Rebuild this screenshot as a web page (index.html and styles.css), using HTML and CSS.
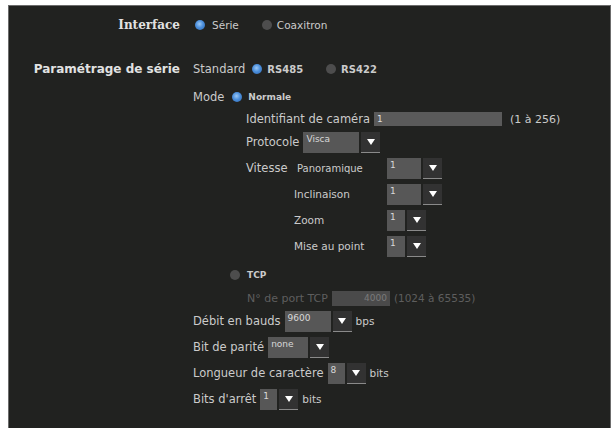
FILE: index.html
```html
<!DOCTYPE html>
<html lang="fr">
<head>
    <meta charset="UTF-8">
    <title>Paramétrage de série</title>
    <link rel="stylesheet" href="styles.css">
</head>
<body>

    <!-- Panneau principal -->
    <div class="panel">
        <div class="grid">

            <!-- Interface -->
            <div class="label label-serif row">Interface</div>
            <div class="row">
                <span class="radio on first"></span><span class="opt">Série</span>
                <span class="radio gap"></span><span class="opt">Coaxitron</span>
            </div>

            <!-- Paramétrage de série -->
            <div class="label row section">Paramétrage de série</div>
            <div class="group section">
                <div class="row">
                    Standard
                    <span class="radio on std"></span><span class="opt-b rs">RS485</span>
                    <span class="radio gap-lg"></span><span class="opt-b rs">RS422</span>
                </div>
                <div class="row row-mid mode">
                    Mode
                    <span class="radio on mode-radio"></span><span class="opt-b">Normale</span>
                </div>

                <div class="sub">
                    <div class="row row-sm">
                        Identifiant de caméra
                        <input class="text-field ident" type="text" value="1">
                        <span class="hint">(1 à 256)</span>
                    </div>
                    <div class="row">
                        Protocole
                        <span class="select"><span class="val w-visca">Visca</span><span class="btn"></span></span>
                    </div>
                    <div class="speed-block">
                        <span class="vlabel">Vitesse</span>
                        <div class="speed">
                            <div class="row"><span class="small pan">Panoramique</span></div>
                            <div class="row"><span class="select"><span class="val w-speed">1</span><span class="btn"></span></span></div>
                            <div class="row"><span class="small">Inclinaison</span></div>
                            <div class="row"><span class="select"><span class="val w-speed">1</span><span class="btn"></span></span></div>
                            <div class="row"><span class="small">Zoom</span></div>
                            <div class="row"><span class="select"><span class="val w-num">1</span><span class="btn"></span></span></div>
                            <div class="row"><span class="small">Mise au point</span></div>
                            <div class="row"><span class="select"><span class="val w-num">1</span><span class="btn"></span></span></div>
                        </div>
                    </div>
                </div>

                <div class="row tcp">
                    <span class="radio"></span><span class="opt-b">TCP</span>
                </div>
                <div class="row row-sm port">
                    N° de port TCP
                    <input class="text-field port-field" type="text" value="4000" disabled>
                    <span class="hint-dim">(1024 à 65535)</span>
                </div>

                <div class="row">
                    Débit en bauds
                    <span class="select"><span class="val w-baud">9600</span><span class="btn"></span></span>
                    <span class="unit">bps</span>
                </div>
                <div class="row">
                    Bit de parité
                    <span class="select"><span class="val w-parity">none</span><span class="btn"></span></span>
                </div>
                <div class="row">
                    Longueur de caractère
                    <span class="select"><span class="val w-bit">8</span><span class="btn"></span></span>
                    <span class="unit">bits</span>
                </div>
                <div class="row">
                    Bits d'arrêt
                    <span class="select"><span class="val w-bit">1</span><span class="btn"></span></span>
                    <span class="unit">bits</span>
                </div>
            </div>

        </div>
    </div>

</body>
</html>
```

FILE: styles.css
```css
body {
    margin: 0;
    padding: 5px 4px 0 8px;
    background-color: #fff;
    font-family: 'DejaVu Sans', Verdana, sans-serif;
    font-size: 11.5px;
    color: #cbcbcb;
    overflow: hidden;
    height: 428px;
    box-sizing: border-box;
}
.panel {
    background-color: #212220;
    border: 1px solid #6c6c6c;
    border-bottom: none;
    height: 440px;
    padding-top: 6px;
    box-sizing: border-box;
}
.grid {
    display: grid;
    grid-template-columns: 171px 1fr;
    column-gap: 13px;
    align-items: start;
}
.section {
    margin-top: 18px;
}
.row {
    display: flex;
    align-items: center;
    height: 26px;
    white-space: nowrap;
}
.row-mid {
    height: 24px;
}
.row-sm {
    height: 20px;
}
.label {
    justify-content: flex-end;
    font-weight: bold;
    font-size: 12px;
    color: #e2e2e2;
}
.label-serif {
    font-family: 'DejaVu Serif', Georgia, serif;
}

/* Radios */
.radio {
    display: inline-block;
    width: 10px;
    height: 10px;
    border-radius: 50%;
    background-color: #4d4d4d;
    margin-right: 5px;
    flex-shrink: 0;
}
.radio.on {
    background: radial-gradient(circle at 45% 40%, #9cc8f5 0, #4b8fdc 45%, #2f66ad 100%);
}
.radio.first {
    margin-left: 2px;
    margin-right: 7px;
}
.radio.gap {
    margin-left: 23px;
}
.radio.std {
    margin-left: 7px;
}
.radio.gap-lg {
    margin-left: 23px;
}
.radio.mode-radio {
    margin-left: 8px;
    margin-right: 6px;
}
.opt {
    font-size: 10.5px;
}
.opt-b {
    font-size: 9px;
    font-weight: bold;
}
.opt-b.rs {
    font-size: 10px;
}
.mode {
    margin-top: 3px;
}

/* Sous-bloc */
.sub {
    margin-left: 53px;
}
.text-field {
    border: none;
    margin: 0 0 0 4px;
    padding: 0 3px;
    height: 14px;
    box-sizing: border-box;
    background-color: #5a5a5a;
    color: #ddd;
    font-family: 'DejaVu Sans', Verdana, sans-serif;
    font-size: 9px;
}
.ident {
    width: 128px;
}
.hint {
    margin-left: 8px;
    font-size: 11px;
}
.speed-block {
    display: flex;
}
.vlabel {
    width: 48px;
    height: 26px;
    line-height: 26px;
}
.speed {
    display: grid;
    grid-template-columns: 93px auto;
}
.small {
    font-size: 10.5px;
}
.small.pan {
    font-size: 10px;
    margin-left: 3px;
}

/* Listes deroulantes */
.select {
    display: inline-flex;
    height: 21px;
    margin-left: 4px;
}
.speed .select {
    margin-left: 0;
}
.select .val {
    background-color: #575757;
    color: #d8d8d8;
    font-size: 9px;
    padding: 2px 3px;
    box-sizing: border-box;
}
.select .btn {
    width: 19px;
    margin-left: 2px;
    background-color: #323232;
    border-bottom: 1px solid #8a8a8a;
    box-sizing: border-box;
    display: flex;
    align-items: center;
    justify-content: center;
}
.select .btn::after {
    content: '';
    border-left: 4px solid transparent;
    border-right: 4px solid transparent;
    border-top: 6px solid #fff;
}
.w-visca { width: 56px; }
.w-speed { width: 34px; }
.w-num { width: 18px; }
.w-baud { width: 46px; }
.w-parity { width: 40px; }
.w-bit { width: 17px; }
.unit {
    margin-left: 4px;
    font-size: 10.5px;
}

/* TCP */
.tcp {
    margin-top: 3px;
    margin-left: 37px;
}
.tcp .radio {
    margin-right: 7px;
}
.port {
    margin-left: 54px;
    color: #5e5e5e;
    font-size: 11px;
}
.port-field {
    width: 58px;
    height: 15px;
    text-align: right;
    background-color: #4a4a4a;
    color: #7a7a7a;
}
.hint-dim {
    margin-left: 4px;
    font-size: 10.5px;
}
```
